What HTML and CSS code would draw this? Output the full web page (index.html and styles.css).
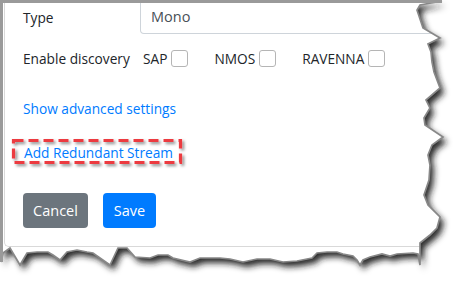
FILE: index.html
```html
<!DOCTYPE html>
<html>
<head>
<meta charset="utf-8">
<link rel="stylesheet" href="styles.css">
</head>
<body>
<div class="frame">
  <div class="modal">
    <div class="body">
      <div class="row">
        <span class="lbl">Type</span>
        <div class="input">Mono</div>
      </div>
      <div class="row row-check">
        <span class="lbl">Enable discovery</span>
        <div class="checks">
          <span class="chk">SAP<span class="box"></span></span>
          <span class="chk">NMOS<span class="box"></span></span>
          <span class="chk">RAVENNA<span class="box"></span></span>
        </div>
      </div>
      <a class="link adv">Show advanced settings</a>
      <a class="link red">Add Redundant Stream</a>
      <div class="buttons">
        <button class="btn cancel">Cancel</button>
        <button class="btn save">Save</button>
      </div>
    </div>
  </div>

  <svg class="mark" width="473" height="300" viewBox="0 0 473 300">
    <defs>
      <filter id="ms" x="-10%" y="-50%" width="130%" height="200%">
        <feDropShadow dx="2" dy="2" stdDeviation="1.5" flood-color="#000" flood-opacity="0.45"/>
      </filter>
    </defs>
    <rect x="13.5" y="140.5" width="167" height="22" fill="none" stroke="#ec3b40" stroke-width="3.2" stroke-dasharray="10 5" filter="url(#ms)"/>
  </svg>

  <svg class="tear" width="473" height="300" viewBox="0 0 473 300">
    <defs>
      <clipPath id="outside">
        <path clip-rule="evenodd" d="M0 0H473V300H0Z M1 1 L442 1 L420 5 L417 10 L419 16 L421 22 L423 28 L440 38 L428 44 L431 52 L432 62 L434 72 L440 88 L426 100 L430 108 L424 118 L425 125 L443 137 L432 145 L428 155 L430 165 L429 180 L424 195 L428 205 L440 217 L437 228 L430 235 L420 243 L420 265 L418 254 L413 253 L397 254 L390 256 L382 254 L370 257 L363 260 L360 265 L357 260 L353 256 L343 254 L337 252 L327 252 L317 253 L312 258 L297 261 L283 262 L270 259 L257 259 L243 262 L230 259 L220 258 L200 258 L190 262 L173 258 L168 255 L158 255 L150 258 L135 257 L127 248 L118 248 L110 265 L93 253 L87 252 L77 250 L67 252 L60 260 L53 255 L48 252 L37 252 L27 253 L20 265 L10 248 L3 253 L1 262 Z"/>
      </clipPath>
      <filter id="blur" x="-10%" y="-10%" width="120%" height="120%">
        <feGaussianBlur stdDeviation="3"/>
      </filter>
    </defs>
    <path fill-rule="evenodd" fill="#fff" d="M0 0H473V300H0Z M1 1 L442 1 L420 5 L417 10 L419 16 L421 22 L423 28 L440 38 L428 44 L431 52 L432 62 L434 72 L440 88 L426 100 L430 108 L424 118 L425 125 L443 137 L432 145 L428 155 L430 165 L429 180 L424 195 L428 205 L440 217 L437 228 L430 235 L420 243 L420 265 L418 254 L413 253 L397 254 L390 256 L382 254 L370 257 L363 260 L360 265 L357 260 L353 256 L343 254 L337 252 L327 252 L317 253 L312 258 L297 261 L283 262 L270 259 L257 259 L243 262 L230 259 L220 258 L200 258 L190 262 L173 258 L168 255 L158 255 L150 258 L135 257 L127 248 L118 248 L110 265 L93 253 L87 252 L77 250 L67 252 L60 260 L53 255 L48 252 L37 252 L27 253 L20 265 L10 248 L3 253 L1 262 Z"/>
    <g clip-path="url(#outside)">
      <path transform="translate(4 5)" filter="url(#blur)" fill="#1e1e1e" fill-opacity="0.95" d="M1 1 L442 1 L420 5 L417 10 L419 16 L421 22 L423 28 L440 38 L428 44 L431 52 L432 62 L434 72 L440 88 L426 100 L430 108 L424 118 L425 125 L443 137 L432 145 L428 155 L430 165 L429 180 L424 195 L428 205 L440 217 L437 228 L430 235 L420 243 L420 265 L418 254 L413 253 L397 254 L390 256 L382 254 L370 257 L363 260 L360 265 L357 260 L353 256 L343 254 L337 252 L327 252 L317 253 L312 258 L297 261 L283 262 L270 259 L257 259 L243 262 L230 259 L220 258 L200 258 L190 262 L173 258 L168 255 L158 255 L150 258 L135 257 L127 248 L118 248 L110 265 L93 253 L87 252 L77 250 L67 252 L60 260 L53 255 L48 252 L37 252 L27 253 L20 265 L10 248 L3 253 L1 262 Z"/>
    </g>
    <path fill="none" stroke="#888" stroke-width="1.7" stroke-linejoin="miter" d="M442 1 L420 5 L417 10 L419 16 L421 22 L423 28 L440 38 L428 44 L431 52 L432 62 L434 72 L440 88 L426 100 L430 108 L424 118 L425 125 L443 137 L432 145 L428 155 L430 165 L429 180 L424 195 L428 205 L440 217 L437 228 L430 235 L420 243 L420 265 L418 254 L413 253 L397 254 L390 256 L382 254 L370 257 L363 260 L360 265 L357 260 L353 256 L343 254 L337 252 L327 252 L317 253 L312 258 L297 261 L283 262 L270 259 L257 259 L243 262 L230 259 L220 258 L200 258 L190 262 L173 258 L168 255 L158 255 L150 258 L135 257 L127 248 L118 248 L110 265 L93 253 L87 252 L77 250 L67 252 L60 260 L53 255 L48 252 L37 252 L27 253 L20 265 L10 248 L3 253 L1 262"/>
    <path fill="none" stroke="#9a9a9a" stroke-width="3" d="M1.5 262 V1.5 H442"/>
  </svg>
</div>
</body>
</html>
```

FILE: styles.css
```css
* { box-sizing: border-box; }
html, body { margin: 0; padding: 0; background: #fff; }
body {
  font-family: "Open Sans", "Noto Sans", sans-serif;
  font-size: 13.7px;
  color: #212529;
}
.frame {
  position: relative;
  width: 473px;
  height: 300px;
  overflow: hidden;
  background: #fff;
}
.modal {
  margin-left: 4px;
  width: 462px;
  height: 247px;
  border-left: 1px solid #d9d9d9;
  border-bottom: 1px solid #d9d9d9;
  border-bottom-left-radius: 5px;
}
.body {
  padding-left: 18px;
  display: flex;
  flex-direction: column;
  align-items: flex-start;
}
.row {
  display: flex;
  align-items: center;
  width: 100%;
}
.lbl {
  width: 117px;
  flex: none;
}
.input {
  flex: 1;
  height: 34px;
  display: flex;
  align-items: center;
  padding-left: 10px;
  border: 1px solid #ced4da;
  border-top: none;
  border-bottom-left-radius: 4px;
  color: #495057;
  font-size: 14.5px;
}
.row-check {
  margin-top: 16px;
  height: 17px;
}
.checks {
  display: flex;
  align-items: center;
  gap: 26px;
  padding-left: 3px;
}
.chk {
  display: flex;
  align-items: center;
  gap: 4px;
}
.box {
  width: 17px;
  height: 17px;
  border: 1px solid #b5b5b5;
  border-radius: 3px;
  background: #fff;
}
.link {
  display: block;
  color: #007bff;
  line-height: 20px;
  text-decoration: none;
}
.adv { margin-top: 32px; }
.red { margin-top: 24px; margin-left: 1px; }
.buttons {
  margin-top: 30px;
  display: flex;
  gap: 15px;
}
.btn {
  height: 35px;
  border: none;
  border-radius: 4px;
  color: #fff;
  font-family: inherit;
  font-size: 14.5px;
  padding: 0;
}
.cancel { background: #6c757d; width: 65px; }
.save { background: #007bff; width: 53px; }
.mark, .tear {
  position: absolute;
  left: 0;
  top: 0;
  pointer-events: none;
}
```
